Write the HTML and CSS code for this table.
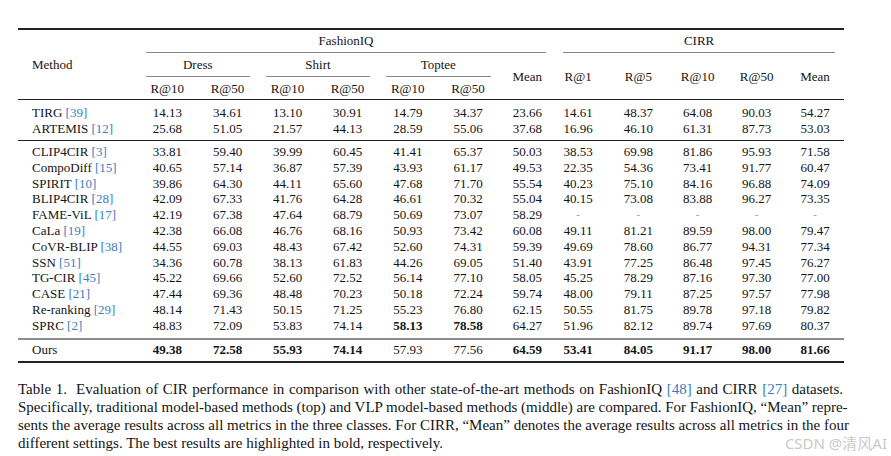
FILE: index.html
```html
<!DOCTYPE html>
<html>
<head>
<meta charset="utf-8">
<link rel="stylesheet" href="styles.css">
</head>
<body>
<div class="page">
<table class="res">
<colgroup>
<col class="cm"><col class="w605"><col class="w60"><col class="w60"><col class="w60"><col class="w605"><col class="w60"><col class="w545"><col class="w56"><col class="w595"><col class="w59"><col class="w59"><col class="w58">
</colgroup>
<thead>
<tr class="h1">
<th rowspan="3" class="meth top bot">Method</th>
<th colspan="7" class="grp top"><div class="rule r-fiq">FashionIQ</div></th>
<th colspan="5" class="grp top"><div class="rule r-cirr">CIRR</div></th>
</tr>
<tr class="h2">
<th colspan="2" class="grp"><div class="rule r-sub">Dress</div></th>
<th colspan="2" class="grp"><div class="rule r-sub">Shirt</div></th>
<th colspan="2" class="grp"><div class="rule r-sub">Toptee</div></th>
<th rowspan="2" class="bot sh-r">Mean</th>
<th rowspan="2" class="bot sh-l">R@1</th>
<th rowspan="2" class="bot">R@5</th>
<th rowspan="2" class="bot">R@10</th>
<th rowspan="2" class="bot">R@50</th>
<th rowspan="2" class="bot">Mean</th>
</tr>
<tr class="h3">
<th class="bot">R@10</th><th class="bot">R@50</th>
<th class="bot">R@10</th><th class="bot">R@50</th>
<th class="bot">R@10</th><th class="bot">R@50</th>
</tr>
</thead>
<tbody class="g1">
<tr class="first"><td class="m">TIRG <a>[39]</a></td><td>14.13</td><td>34.61</td><td>13.10</td><td>30.91</td><td>14.79</td><td>34.37</td><td class="sh-r">23.66</td><td class="sh-l">14.61</td><td>48.37</td><td>64.08</td><td>90.03</td><td>54.27</td></tr>
<tr class="last"><td class="m">ARTEMIS <a>[12]</a></td><td>25.68</td><td>51.05</td><td>21.57</td><td>44.13</td><td>28.59</td><td>55.06</td><td class="sh-r">37.68</td><td class="sh-l">16.96</td><td>46.10</td><td>61.31</td><td>87.73</td><td>53.03</td></tr>
</tbody>
<tbody class="g2">
<tr class="first"><td class="m">CLIP4CIR <a>[3]</a></td><td>33.81</td><td>59.40</td><td>39.99</td><td>60.45</td><td>41.41</td><td>65.37</td><td class="sh-r">50.03</td><td class="sh-l">38.53</td><td>69.98</td><td>81.86</td><td>95.93</td><td>71.58</td></tr>
<tr><td class="m">CompoDiff <a>[15]</a></td><td>40.65</td><td>57.14</td><td>36.87</td><td>57.39</td><td>43.93</td><td>61.17</td><td class="sh-r">49.53</td><td class="sh-l">22.35</td><td>54.36</td><td>73.41</td><td>91.77</td><td>60.47</td></tr>
<tr><td class="m">SPIRIT <a>[10]</a></td><td>39.86</td><td>64.30</td><td>44.11</td><td>65.60</td><td>47.68</td><td>71.70</td><td class="sh-r">55.54</td><td class="sh-l">40.23</td><td>75.10</td><td>84.16</td><td>96.88</td><td>74.09</td></tr>
<tr><td class="m">BLIP4CIR <a>[28]</a></td><td>42.09</td><td>67.33</td><td>41.76</td><td>64.28</td><td>46.61</td><td>70.32</td><td class="sh-r">55.04</td><td class="sh-l">40.15</td><td>73.08</td><td>83.88</td><td>96.27</td><td>73.35</td></tr>
<tr><td class="m">FAME-ViL <a>[17]</a></td><td>42.19</td><td>67.38</td><td>47.64</td><td>68.79</td><td>50.69</td><td>73.07</td><td class="sh-r">58.29</td><td class="sh-l dash">-</td><td class="dash">-</td><td class="dash">-</td><td class="dash">-</td><td class="dash">-</td></tr>
<tr><td class="m">CaLa <a>[19]</a></td><td>42.38</td><td>66.08</td><td>46.76</td><td>68.16</td><td>50.93</td><td>73.42</td><td class="sh-r">60.08</td><td class="sh-l">49.11</td><td>81.21</td><td>89.59</td><td>98.00</td><td>79.47</td></tr>
<tr><td class="m">CoVR-BLIP <a>[38]</a></td><td>44.55</td><td>69.03</td><td>48.43</td><td>67.42</td><td>52.60</td><td>74.31</td><td class="sh-r">59.39</td><td class="sh-l">49.69</td><td>78.60</td><td>86.77</td><td>94.31</td><td>77.34</td></tr>
<tr><td class="m">SSN <a>[51]</a></td><td>34.36</td><td>60.78</td><td>38.13</td><td>61.83</td><td>44.26</td><td>69.05</td><td class="sh-r">51.40</td><td class="sh-l">43.91</td><td>77.25</td><td>86.48</td><td>97.45</td><td>76.27</td></tr>
<tr><td class="m">TG-CIR <a>[45]</a></td><td>45.22</td><td>69.66</td><td>52.60</td><td>72.52</td><td>56.14</td><td>77.10</td><td class="sh-r">58.05</td><td class="sh-l">45.25</td><td>78.29</td><td>87.16</td><td>97.30</td><td>77.00</td></tr>
<tr><td class="m">CASE <a>[21]</a></td><td>47.44</td><td>69.36</td><td>48.48</td><td>70.23</td><td>50.18</td><td>72.24</td><td class="sh-r">59.74</td><td class="sh-l">48.00</td><td>79.11</td><td>87.25</td><td>97.57</td><td>77.98</td></tr>
<tr><td class="m">Re-ranking <a>[29]</a></td><td>48.14</td><td>71.43</td><td>50.15</td><td>71.25</td><td>55.23</td><td>76.80</td><td class="sh-r">62.15</td><td class="sh-l">50.55</td><td>81.75</td><td>89.78</td><td>97.18</td><td>79.82</td></tr>
<tr class="last"><td class="m">SPRC <a>[2]</a></td><td>48.83</td><td>72.09</td><td>53.83</td><td>74.14</td><td><b>58.13</b></td><td><b>78.58</b></td><td class="sh-r">64.27</td><td class="sh-l">51.96</td><td>82.12</td><td>89.74</td><td>97.69</td><td>80.37</td></tr>
</tbody>
<tbody class="g3">
<tr class="first last"><td class="m">Ours</td><td><b>49.38</b></td><td><b>72.58</b></td><td><b>55.93</b></td><td><b>74.14</b></td><td>57.93</td><td>77.56</td><td class="sh-r"><b>64.59</b></td><td class="sh-l"><b>53.41</b></td><td><b>84.05</b></td><td><b>91.17</b></td><td><b>98.00</b></td><td><b>81.66</b></td></tr>
</tbody>
</table>
<div class="caption">
<span class="ln just">Table 1.&nbsp; Evaluation of CIR performance in comparison with other state-of-the-art methods on FashionIQ <a>[48]</a> and CIRR <a>[27]</a> datasets.</span>
<span class="ln just">Specifically, traditional model-based methods (top) and VLP model-based methods (middle) are compared. For FashionIQ, “Mean” repre-</span>
<span class="ln just">sents the average results across all metrics in the three classes. For CIRR, “Mean” denotes the average results across all metrics in the four</span>
<span class="ln">different settings. The best results are highlighted in bold, respectively.</span>
</div>
<div class="mark">CSDN @清风AI</div>
</div>
</body>
</html>
```
FILE: styles.css
```css
html, body {
  margin: 0;
  padding: 0;
  background: #ffffff;
}
.page {
  position: relative;
  width: 891px;
  height: 456px;
  padding: 28px 0 0 18px;
  box-sizing: border-box;
  font-family: "Liberation Serif", "Times New Roman", serif;
  color: #141414;
}
.res {
  border-collapse: separate;
  border-spacing: 0;
  table-layout: fixed;
  width: 826px;
  font-size: 13px;
}
.cm { width: 119px; }
.w605 { width: 60.5px; }
.w60 { width: 60px; }
.w545 { width: 54.5px; }
.w56 { width: 56px; }
.w595 { width: 59.5px; }
.w59 { width: 59px; }
.w58 { width: 58px; }
th {
  font-weight: normal;
  padding: 0;
  text-align: center;
  vertical-align: middle;
  line-height: 15px;
}
.top { border-top: 2px solid #222; }
.bot { border-bottom: 1px solid #222; }
.h1 { height: 23px; }
.h2 { height: 24px; }
.h3 { height: 23px; }
.grp { vertical-align: bottom; }
.rule {
  border-bottom: 1px solid #8a8a8a;
  line-height: 22px;
}
.h2 .rule { line-height: 23px; }
.r-fiq { margin: 0 6.5px 0 9px; }
.r-cirr { margin: 0 9px 0 10.5px; }
.r-sub { margin: 0 7.5px 0 8.5px; }
.meth { text-align: left; padding-left: 14px; }
td {
  padding: 0;
  text-align: center;
  line-height: 15.8px;
  white-space: nowrap;
}
td.m { text-align: left; padding-left: 14px; }
.sh-r { padding-left: 4px; }
.sh-l { padding-right: 5px; }
a { color: #3a7dbf; }
.dash { color: #9a9a9a; font-size: 11px; }
b { font-weight: bold; }
.g1 .first td { padding-top: 5px; }
.g1 .last td { padding-bottom: 3px; border-bottom: 1px solid #222; }
.g2 .first td { padding-top: 3.5px; }
.g2 .last td { padding-bottom: 4px; border-bottom: 2px solid #8c8c8c; }
.g3 .first td { padding-top: 2.5px; padding-bottom: 3px; border-bottom: 2px solid #222; }
.caption {
  width: 825px;
  margin-top: 17px;
  font-size: 15px;
  line-height: 18px;
}
.ln { display: block; white-space: nowrap; }
.just { text-align: justify; text-align-last: justify; }
.mark {
  position: absolute;
  right: 4px;
  top: 433px;
  font-family: "Noto Sans", "Noto Sans CJK SC", sans-serif;
  font-size: 15px;
  line-height: 20px;
  color: rgba(175, 175, 175, 0.7);
}
```
